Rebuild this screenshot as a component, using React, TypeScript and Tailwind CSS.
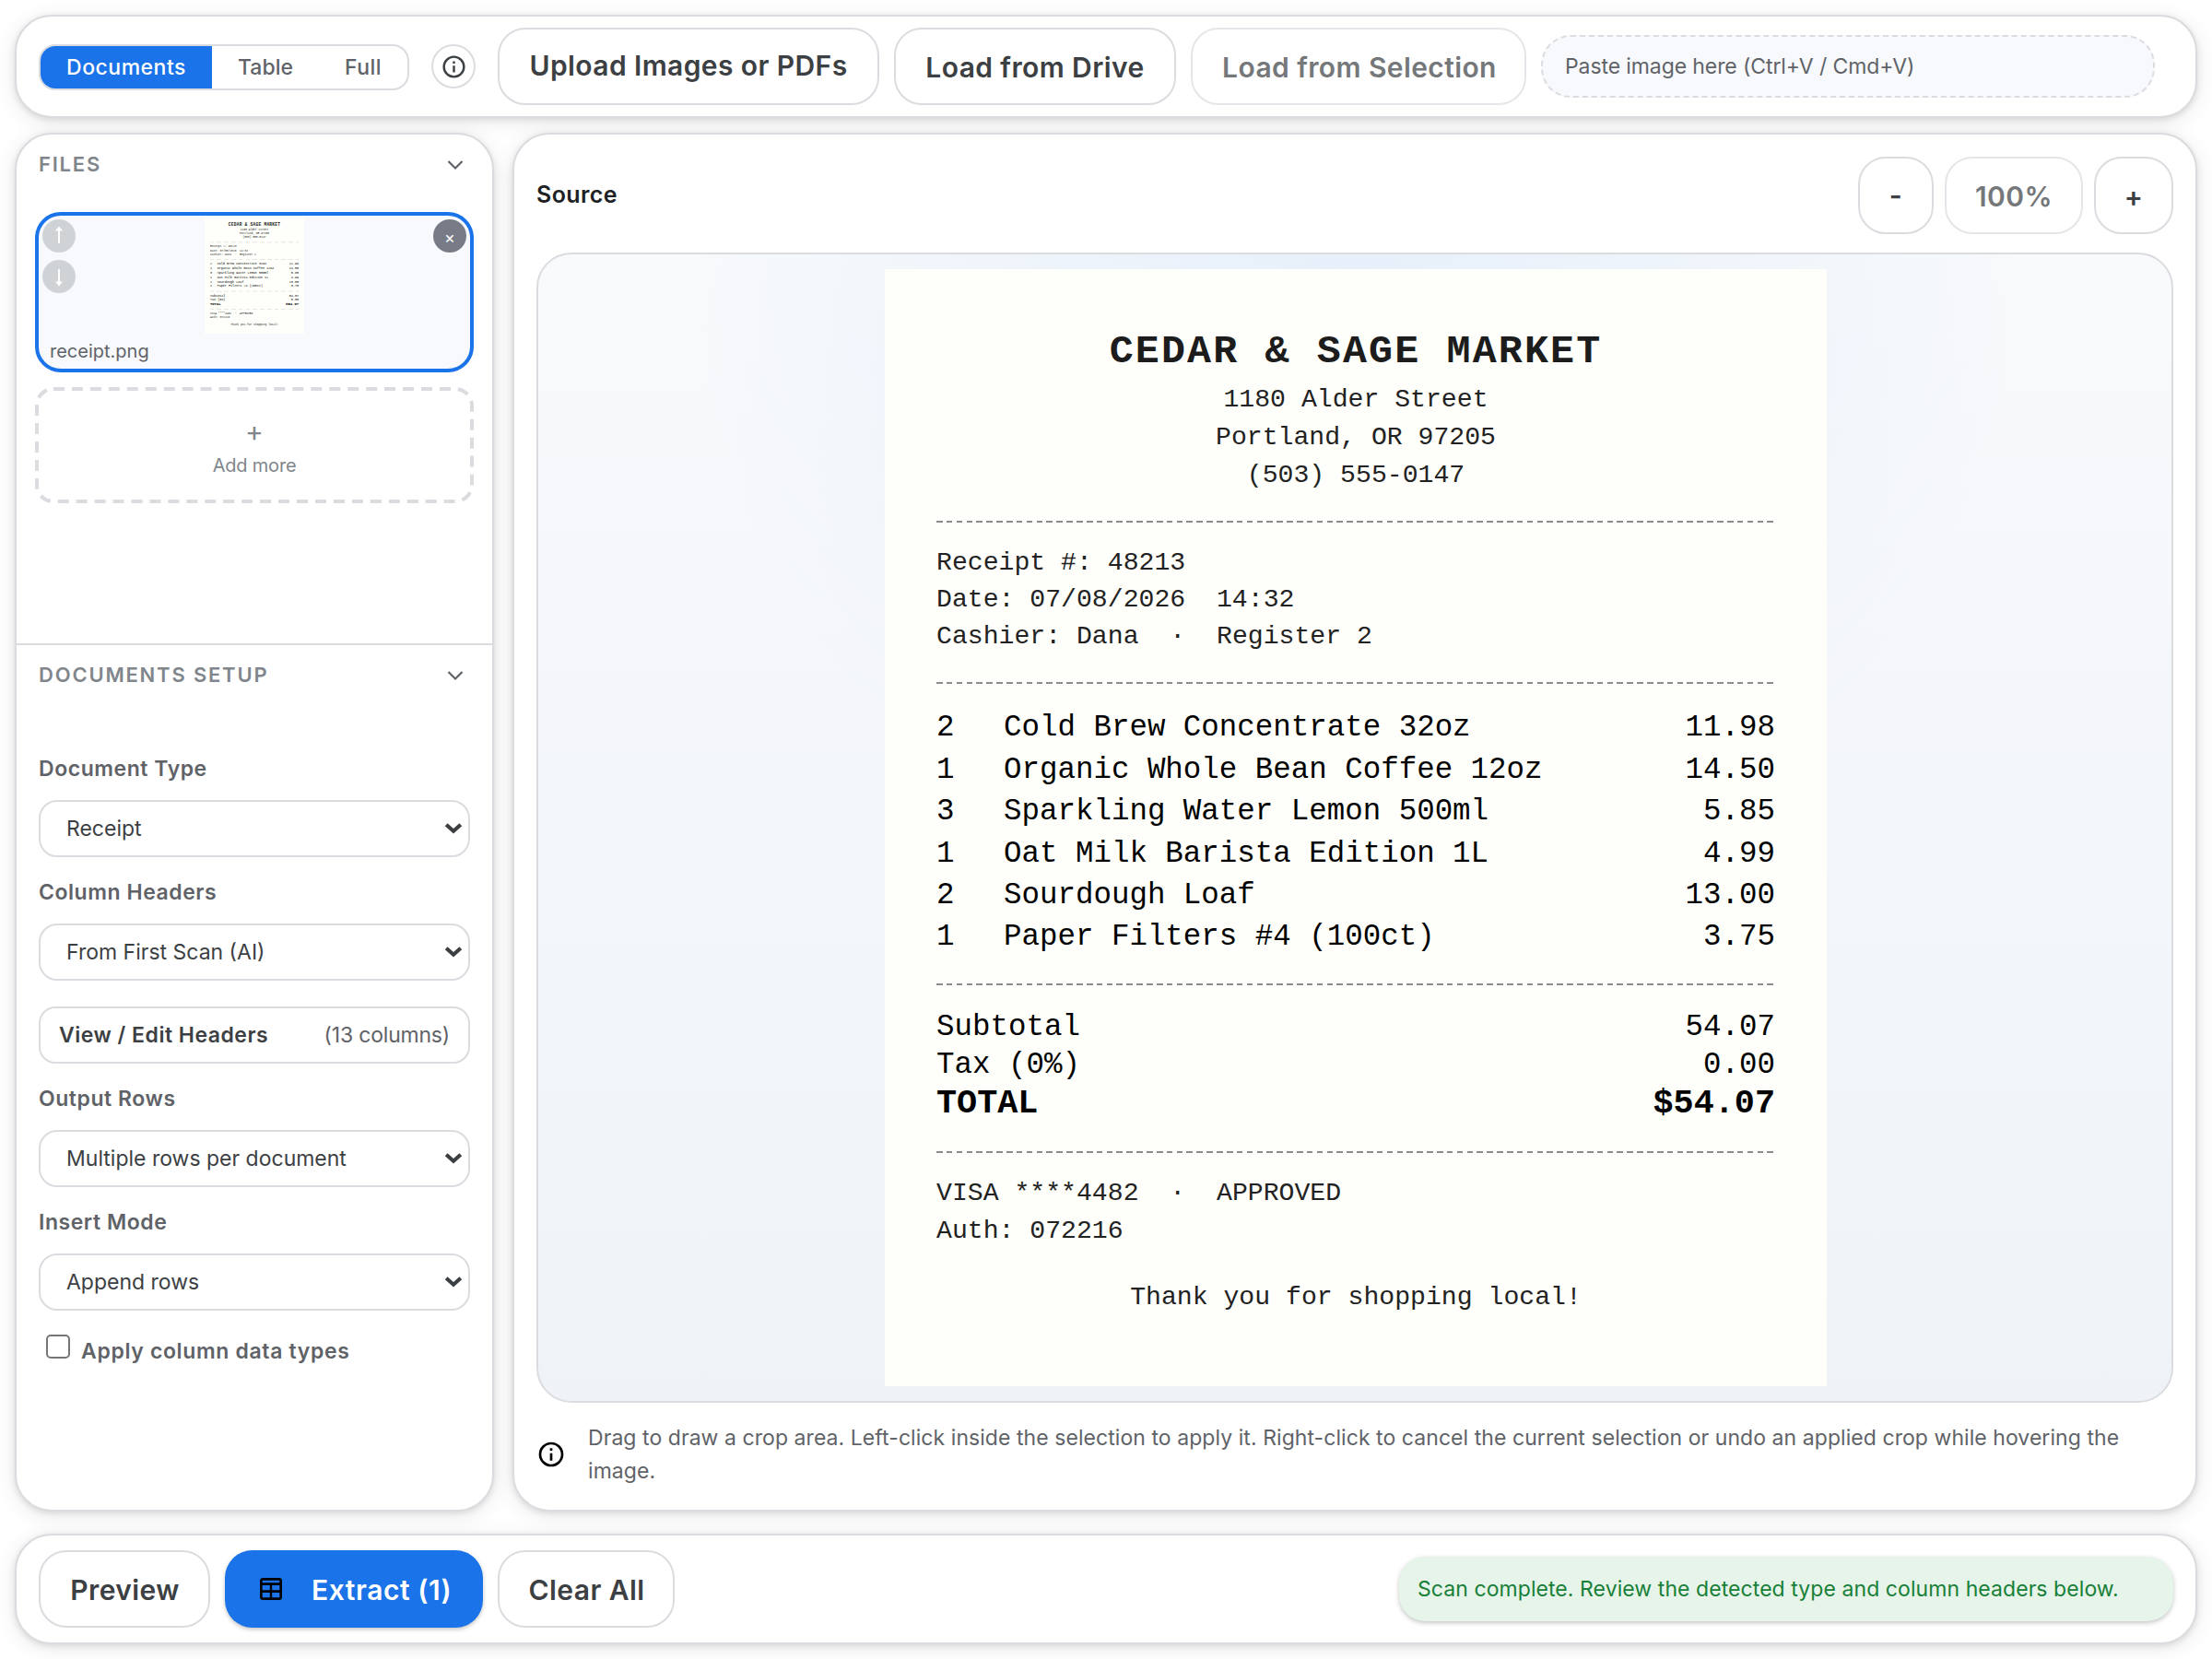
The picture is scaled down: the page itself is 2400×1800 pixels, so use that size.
import React, { useState } from "react";

const CARD =
  "bg-white border-2 border-[#dadce0] rounded-[40px] shadow-[0_2px_6px_rgba(60,64,67,0.15),0_4px_24px_rgba(0,0,0,0.09)]";
const BTN =
  "h-[84px] flex items-center justify-center border-2 border-[#dadce0] rounded-[30px] bg-white text-[30px] font-semibold tracking-[0.4px] text-[#3c4043] whitespace-nowrap";

const InfoIcon = ({ className }: { className?: string }) => (
  <svg viewBox="0 0 24 24" fill="none" className={className}>
    <circle cx="12" cy="12" r="9" stroke="currentColor" strokeWidth="2" />
    <path d="M11 7h2v2h-2zM11 11h2v6h-2z" fill="currentColor" />
  </svg>
);

const Chevron = () => (
  <svg viewBox="0 0 20 12" fill="none" className="mt-[2px] w-5 h-3">
    <path d="M2.5 2l7.5 7.5L17.5 2" stroke="#5f6368" strokeWidth="2.2" />
  </svg>
);

const TableIcon = () => (
  <svg viewBox="0 0 72 72" fill="none" className="w-6 h-6 text-black">
    <rect x="4" y="4" width="64" height="64" rx="5" stroke="currentColor" strokeWidth="8" />
    <path d="M4 20h64M4 44h64" stroke="currentColor" strokeWidth="8" />
    <path d="M36 20v48" stroke="currentColor" strokeWidth="7" />
  </svg>
);

const MoveIcon = ({ down }: { down?: boolean }) => (
  <svg viewBox="0 0 36 36" fill="none" className={down ? "w-9 h-9 rotate-180" : "w-9 h-9"}>
    <path d="M18 26V10" stroke="#fff" strokeWidth="2" />
    <path d="M14 12.5L18 7.5l4 5z" fill="#fff" />
  </svg>
);

const items = [
  { qty: 2, name: "Cold Brew Concentrate 32oz", price: "11.98" },
  { qty: 1, name: "Organic Whole Bean Coffee 12oz", price: "14.50" },
  { qty: 3, name: "Sparkling Water Lemon 500ml", price: "5.85" },
  { qty: 1, name: "Oat Milk Barista Edition 1L", price: "4.99" },
  { qty: 2, name: "Sourdough Loaf", price: "13.00" },
  { qty: 1, name: "Paper Filters #4 (100ct)", price: "3.75" },
];

const Dashes = () => (
  <div className="h-[2px] bg-[repeating-linear-gradient(90deg,#8c8c8c_0_6.6px,transparent_6.6px_10.86px)]" />
);

const Receipt = () => (
  <div className="w-[1022px] h-[1212px] bg-[#fefffa] px-14 pt-16 font-['Liberation_Mono',monospace] whitespace-pre text-black">
    <div className="text-center text-[43.3px] leading-[52px] tracking-[2.16px] font-bold text-[#1c1c1c]">CEDAR & SAGE MARKET</div>
    <div className="mt-1.5 text-center text-[28.15px] leading-[40.8px] text-[#222]">
      <div>1180 Alder Street</div>
      <div>Portland, OR 97205</div>
      <div>(503) 555-0147</div>
    </div>
    <div className="mt-[29px]"><Dashes /></div>
    <div className="mt-6 text-[28.15px] leading-[40px] text-[#222]">
      <div>Receipt #: 48213</div>
      <div>Date: 07/08/2026{"  "}14:32</div>
      <div>Cashier: Dana{"  "}·{"  "}Register 2</div>
    </div>
    <div className="mt-[29px]"><Dashes /></div>
    <div className="mt-[25px] text-[32.47px] leading-[45.4px]">
      {items.map((item) => (
        <div key={item.name} className="flex">
          <span className="w-[73px]">{item.qty}</span>
          <span className="flex-1">{item.name}</span>
          <span>{item.price}</span>
        </div>
      ))}
    </div>
    <div className="mt-[27px]"><Dashes /></div>
    <div className="mt-[25px] text-[32.47px] leading-[41px]">
      <div className="flex justify-between">
        <span>Subtotal</span>
        <span>54.07</span>
      </div>
      <div className="flex justify-between">
        <span>Tax (0%)</span>
        <span>0.00</span>
      </div>
      <div className="flex justify-between text-[36.8px] leading-[43px] font-bold">
        <span>TOTAL</span>
        <span>$54.07</span>
      </div>
    </div>
    <div className="mt-[30px]"><Dashes /></div>
    <div className="mt-6 text-[28.15px] leading-[40.8px] text-[#222]">
      <div>VISA ****4482{"  "}·{"  "}APPROVED</div>
      <div>Auth: 072216</div>
    </div>
    <div className="mt-8 text-center text-[28.15px] leading-[40.8px] text-[#222]">Thank you for shopping local!</div>
  </div>
);

const SectionHeader = ({ title }: { title: string }) => (
  <div className="h-16 flex items-center justify-between pl-6 pr-[30px]">
    <span className="text-[22px] font-semibold tracking-[1.8px] text-[#80868b]">{title}</span>
    <Chevron />
  </div>
);

const SelectField = ({ label, value }: { label: string; value: string }) => (
  <div className="pt-6 flex flex-col gap-5">
    <label className="text-[23px] leading-7 font-semibold tracking-[0.55px] text-[#5f6368]">{label}</label>
    <div className="h-[62px] flex items-center justify-between border-2 border-[#dadce0] rounded-[20px] pl-7 pr-[6px] text-[23px] text-[#3c4043]">
      <span>{value}</span>
      <svg viewBox="0 0 20 14" fill="none" className="w-5 h-3.5">
        <path d="M2.2 2.8l7.8 7 7.8-7" stroke="#3c4043" strokeWidth="4.2" />
      </svg>
    </div>
  </div>
);

const App = () => {
  const [mode, setMode] = useState("Documents");
  const [applyTypes, setApplyTypes] = useState(false);

  return (
    <div className="w-[2400px] h-[1800px] bg-white p-4 flex flex-col overflow-hidden font-['Inter',sans-serif]">

      {/* Toolbar */}
      <div className={`${CARD} h-28 shrink-0 flex items-center px-6`}>
        <div className="h-[50px] mt-[2px] flex border-2 border-[#dadce0] rounded-[18px] overflow-hidden text-[23px] font-medium text-[#5f6368]">
          {[
            { name: "Documents", style: "w-[186px] tracking-[0.5px]" },
            { name: "Table", style: "w-[116px]" },
            { name: "Full", style: "w-[96px] tracking-[0.5px]" },
          ].map((tab) => (
            <button
              key={tab.name}
              onClick={() => setMode(tab.name)}
              className={`${tab.style} pt-[1px] ${mode === tab.name ? "bg-[#1a73e8] text-white" : ""}`}
            >
              {tab.name}
            </button>
          ))}
        </div>
        <button className="ml-6 w-12 h-12 flex items-center justify-center rounded-full border-2 border-[#dadce0] text-[#3c4043]">
          <InfoIcon className="w-[29px] h-[29px]" />
        </button>
        <button className={`${BTN} ml-6 w-[414px] pb-[2px]`}>Upload Images or PDFs</button>
        <button className={`${BTN} ml-4 w-[306px] pt-[2px]`}>Load from Drive</button>
        <button className={`${BTN} ml-4 w-[364px] pt-[2px] pl-[2px] opacity-70`}>Load from Selection</button>
        <div className="ml-4 w-[666px] h-[68px] flex items-center border-2 border-dashed border-[#dadce0] rounded-[32px] bg-[#f8f9fc] px-6 text-[23px] tracking-[-0.1px] text-[#5f6368]">
          Paste image here (Ctrl+V / Cmd+V)
        </div>
      </div>

      <div className="mt-4 h-[1496px] shrink-0 flex gap-5">
        {/* Sidebar */}
        <div className={`${CARD} w-[520px] shrink-0 overflow-hidden`}>
          <div className="h-[552px]">
            <SectionHeader title="FILES" />
            <div className="mt-5 px-5 flex flex-col gap-4">
              <div className="relative h-[174px] border-4 border-[#1a73e8] rounded-[28px] bg-[#f8f9fc]">
                <div className="mx-auto w-[108px] h-32 overflow-hidden">
                  <div className="origin-top-left scale-[0.1057]"><Receipt /></div>
                </div>
                <div className="mt-[5px] px-3 text-[20px] leading-7 text-[#5f6368]">receipt.png</div>
                <div className="absolute left-1 top-1 flex flex-col gap-2">
                  <button className="w-9 h-9 rounded-full bg-[#d0d3d6]"><MoveIcon /></button>
                  <button className="w-9 h-9 rounded-full bg-[#d0d3d6]"><MoveIcon down /></button>
                </div>
                <button className="absolute right-1 top-1 w-9 h-9 rounded-full bg-[#777b86] text-white text-[18px] leading-9 pt-[2px]">×</button>
              </div>
              <div className="relative h-[126px] pt-[30px] flex flex-col items-center text-[#80868b]">
                <svg viewBox="0 0 476 126" fill="none" className="absolute inset-0 w-full h-full">
                  <rect x="2" y="2" width="472" height="122" rx="18" stroke="#dadce0" strokeWidth="4" strokeDasharray="12 7.95" />
                </svg>
                <span className="text-[30px] leading-9">+</span>
                <span className="mt-[5px] text-[20px] leading-7 tracking-[-0.2px]">Add more</span>
              </div>
            </div>
          </div>

          <div className="border-t-2 border-[#dadce0]">
            <SectionHeader title="DOCUMENTS SETUP" />
            <div className="pt-8 px-6">
              <SelectField label="Document Type" value="Receipt" />
              <SelectField label="Column Headers" value="From First Scan (AI)" />
              <button className="mt-7 w-full h-[62px] flex items-center justify-between border-2 border-[#dadce0] rounded-[18px] px-5 text-[23px]">
                <span className="font-semibold tracking-[0.5px] text-[#3c4043]">View / Edit Headers</span>
                <span className="text-[#5f6368] tracking-[-0.2px]">(13 columns)</span>
              </button>
              <SelectField label="Output Rows" value="Multiple rows per document" />
              <SelectField label="Insert Mode" value="Append rows" />
              <label className="mt-[26px] pl-2 flex items-start gap-3">
                <input
                  type="checkbox"
                  checked={applyTypes}
                  onChange={(e) => setApplyTypes(e.target.checked)}
                  className="appearance-none w-[26px] h-[26px] border-2 border-[#767676] rounded-[5px] bg-white"
                />
                <span className="mt-1 text-[23px] leading-7 font-semibold tracking-[0.65px] text-[#5f6368]">Apply column data types</span>
              </label>
            </div>
          </div>
        </div>

        {/* Source preview */}
        <div className={`${CARD} flex-1 p-6`}>
          <div className="flex items-center">
            <h2 className="flex-1 text-[25px] font-semibold tracking-[0.4px] text-[#202124]">Source</h2>
            <div className="flex gap-3">
              <button className={`${BTN} w-[82px]`}>-</button>
              <button className={`${BTN} w-[150px] pt-[2px] opacity-70`}>100%</button>
              <button className={`${BTN} w-[86px] pt-[2px]`}>+</button>
            </div>
          </div>
          <div className="mt-5 h-[1248px] flex items-start justify-center pt-4 pl-[2px] border-2 border-[#dadce0] rounded-[38px] bg-[radial-gradient(circle_at_top,rgba(26,115,232,0.08),transparent_48%),linear-gradient(180deg,#f8fafc,#eff3f8)]">
            <Receipt />
          </div>
          <div className="mt-5 flex items-center gap-6">
            <InfoIcon className="w-8 h-8 shrink-0 text-black" />
            <p className="text-[23px] leading-9 tracking-[0.06px] text-[#5f6368]">
              Drag to draw a crop area. Left-click inside the selection to apply it. Right-click to cancel the current selection or undo an applied crop while hovering the image.
            </p>
          </div>
        </div>
      </div>

      {/* Actions */}
      <div className={`${CARD} mt-6 h-[120px] shrink-0 flex items-center px-6`}>
        <button className={`${BTN} w-[186px] pt-[2px] pl-[1px]`}>Preview</button>
        <button className="ml-4 w-[280px] h-[84px] flex items-center pl-[38px] gap-8 rounded-[30px] bg-[#1a73e8] text-white text-[30px] font-semibold tracking-[0.55px] shadow-[0_2px_4px_rgba(60,64,67,0.3)]">
          <TableIcon />
          <span className="pt-[2px]">Extract (1)</span>
        </button>
        <button className={`${BTN} ml-4 w-[192px] pt-[2px] pl-[1px]`}>Clear All</button>
        <div className="ml-auto w-[840px] h-[70px] flex items-center px-5 rounded-[28px] bg-[#e6f4ea] text-[23px] tracking-[0.07px] text-[#188038] shadow-[0_2px_5px_rgba(60,64,67,0.3)]">
          Scan complete. Review the detected type and column headers below.
        </div>
      </div>
    </div>
  );
};

export default App;
